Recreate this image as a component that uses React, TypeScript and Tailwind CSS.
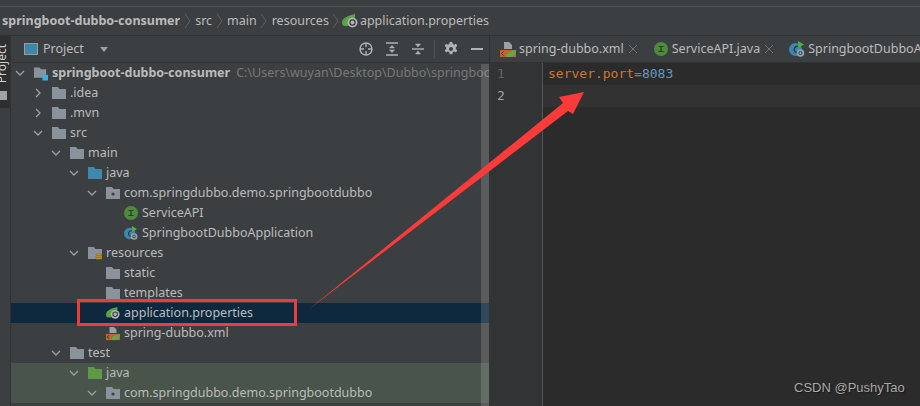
import type { ReactNode } from "react";

const UI = "font-['Noto_Sans','Open_Sans',sans-serif]";

function Chevron({ open }: { open: boolean }) {
  return (
    <svg width="14" height="14" viewBox="0 0 14 14" fill="none" stroke="#9da0a2" strokeWidth="1.3">
      {open ? <path d="M3 5l4 4 4-4" /> : <path d="M5 3l4 4-4 4" />}
    </svg>
  );
}

function Folder({ color = "#8a939b", dot, lines }: { color?: string; dot?: boolean; lines?: boolean }) {
  return (
    <svg width="14" height="14" viewBox="0 0 14 14">
      <path d="M0 1h6l1.500 2H14v10H0z" fill={color} />
      {dot && <circle cx="7" cy="8" r="1.600" fill="#3c3f41" />}
      {lines && <path d="M8 8h6v1.200H8zM8 10h6v1.200H8zM8 12h6v1.200H8z" fill="#e0a030" stroke="#3c3f41" strokeWidth="0.3" />}
    </svg>
  );
}

function ModuleIcon() {
  return (
    <svg width="15" height="15" viewBox="0 0 15 15">
      <path d="M0 1h6l1.500 2H13v9H0z" fill="#8a939b" />
      <rect x="9" y="9" width="6" height="6" fill="#3bb0e0" />
    </svg>
  );
}

function InterfaceIcon() {
  return (
    <svg width="14" height="14" viewBox="0 0 14 14">
      <circle cx="7" cy="7" r="7" fill="#4f8a3c" />
      <path d="M4.500 4h5v1H7.600v4H9.500v1h-5V9h1.900V5H4.500z" fill="#2c3a28" />
    </svg>
  );
}

function SpringAppIcon() {
  return (
    <svg width="16" height="16" viewBox="0 0 16 16">
      <circle cx="6.500" cy="8.500" r="6.500" fill="#3d87ad" />
      <path d="M9.500 5.500a3.200 3.200 0 1 0 0 6" fill="none" stroke="#2c3a44" strokeWidth="1.400" />
      <path d="M9 0l6 3.500L9 7z" fill="#4fae3f" />
      <circle cx="11.500" cy="12" r="3.800" fill="#8fa3b0" />
      <circle cx="11.500" cy="12" r="1.600" fill="none" stroke="#3c3f41" strokeWidth="1" />
    </svg>
  );
}

function LeafPropsIcon() {
  return (
    <svg width="16" height="14" viewBox="0 0 16 14">
      <path d="M0 9C0 4 5 2 13 0c.5 3-.5 5-3 6l-4 6H3C1 12 0 11 0 9z" fill="#5aa345" />
      <circle cx="10.500" cy="8.500" r="5" fill="#aeb4b8" />
      <circle cx="10.500" cy="8.500" r="2.600" fill="none" stroke="#3a3d3f" strokeWidth="1.200" />
    </svg>
  );
}

function XmlSpringIcon() {
  return (
    <svg width="16" height="15" viewBox="0 0 16 15">
      <path d="M4 0h5l3 3v4H4z" fill="#9aa0a5" />
      <rect x="0" y="8" width="16" height="7" fill="#c4612c" />
      <path d="M3.500 9.500L1.500 11.500l2 2" fill="none" stroke="#2b2b2b" strokeWidth="1" />
      <path d="M6 15c0-4 4-6 10-7 0 4-2 7-6 7z" fill="#62a84b" />
    </svg>
  );
}

type Row = {
  depth: number;
  label: string;
  open?: boolean;
  icon: ReactNode;
  bg?: string;
  hint?: string;
  bold?: boolean;
};

const rows: Row[] = [
  { depth: 0, label: "springboot-dubbo-consumer", open: true, icon: <ModuleIcon />, bold: true, hint: "C:\\Users\\wuyan\\Desktop\\Dubbo\\springboot-dubbo-consumer" },
  { depth: 1, label: ".idea", open: false, icon: <Folder /> },
  { depth: 1, label: ".mvn", open: false, icon: <Folder /> },
  { depth: 1, label: "src", open: true, icon: <Folder /> },
  { depth: 2, label: "main", open: true, icon: <Folder /> },
  { depth: 3, label: "java", open: true, icon: <Folder color="#3f88ab" /> },
  { depth: 4, label: "com.springdubbo.demo.springbootdubbo", open: true, icon: <Folder dot /> },
  { depth: 5, label: "ServiceAPI", icon: <InterfaceIcon /> },
  { depth: 5, label: "SpringbootDubboApplication", icon: <SpringAppIcon /> },
  { depth: 3, label: "resources", open: true, icon: <Folder lines /> },
  { depth: 4, label: "static", icon: <Folder /> },
  { depth: 4, label: "templates", icon: <Folder /> },
  { depth: 4, label: "application.properties", icon: <LeafPropsIcon />, bg: "bg-[#0e293e]" },
  { depth: 4, label: "spring-dubbo.xml", icon: <XmlSpringIcon /> },
  { depth: 2, label: "test", open: true, icon: <Folder /> },
  { depth: 3, label: "java", open: true, icon: <Folder color="#5c9a48" />, bg: "bg-[#49544a]" },
  { depth: 4, label: "com.springdubbo.demo.springbootdubbo", open: true, icon: <Folder dot />, bg: "bg-[#49544a]" },
];

function TreeRow({ row }: { row: Row }) {
  const hasChevron = row.open !== undefined;
  return (
    <div
      className={`flex h-5 shrink-0 items-center whitespace-nowrap ${row.bg ?? ""}`}
      style={{ paddingLeft: 2 + row.depth * 18 }}
    >
      <span className="flex w-[14px] shrink-0 justify-center">
        {hasChevron && <Chevron open={!!row.open} />}
      </span>
      <span className="ml-[7px] flex w-[14px] shrink-0 items-center">{row.icon}</span>
      <span className={`ml-1 ${row.bold ? "font-bold" : ""}`}>{row.label}</span>
      {row.hint && <span className="ml-[6px] text-[#787878]">{row.hint}</span>}
    </div>
  );
}

function Sep() {
  return (
    <svg width="8" height="18" viewBox="0 0 8 18" fill="none" stroke="#5e6163" className="mx-[3.5px]">
      <path d="M1 2l5 7-5 7" />
    </svg>
  );
}

function Tab({ icon, label, close }: { icon: ReactNode; label: string; close?: boolean }) {
  return (
    <div className="flex shrink-0 items-center">
      <span className="flex w-4 justify-center">{icon}</span>
      <span className="ml-[3px]">{label}</span>
      {close && (
        <svg width="8" height="8" viewBox="0 0 8 8" stroke="#6e7274" className="ml-[5px] mr-[16px]">
          <path d="M0 0l8 8M8 0L0 8" />
        </svg>
      )}
    </div>
  );
}

export default function App() {
  return (
    <div className={`relative flex h-[406px] w-[920px] flex-col overflow-hidden bg-[#3c3f41] text-[12.5px] leading-5 text-[#bbbbbb] ${UI}`}>
      <div className="h-[7px] shrink-0 border-b border-[#515355]" />

      <div className="flex h-[29px] shrink-0 items-center border-b border-[#323232] pl-[2px]">
        <span className="font-bold">springboot-dubbo-consumer</span>
        <Sep />
        <span>src</span>
        <Sep />
        <span>main</span>
        <Sep />
        <span>resources</span>
        <Sep />
        <span className="-ml-[2px] mr-[2px] flex">
          <LeafPropsIcon />
        </span>
        <span>application.properties</span>
      </div>

      <div className="flex min-h-0 flex-1">
        <div className="w-[11px] shrink-0 overflow-hidden border-r border-[#323232]">
          <div className="flex h-[72px] flex-col items-end bg-[#2d2f30] pt-[8px]">
            <span className="mr-[2px] rotate-180 text-[12px] leading-3 text-[#d0d0d0] [writing-mode:vertical-rl]">Project</span>
            <svg width="7" height="9" viewBox="0 0 7 9" className="mr-[3px] mt-[8px]">
              <path d="M0 0h7v9H0z" fill="#a0a2a4" />
            </svg>
          </div>
        </div>

        <div className="relative flex w-[478px] shrink-0 flex-col">
          <div className="flex h-[27px] shrink-0 items-center border-b border-[#323232] pl-[13px]">
            <svg width="14" height="12" viewBox="0 0 14 12">
              <rect x="0.500" y="0.500" width="13" height="11" fill="#3f86a8" stroke="#9a9da0" />
            </svg>
            <span className="ml-[5px]">Project</span>
            <svg width="8" height="5" viewBox="0 0 8 5" className="ml-[16px]">
              <path d="M0 0h8L4 5z" fill="#9da0a2" />
            </svg>
            <div className="ml-auto flex items-center pr-[6px]">
              <svg width="14" height="14" viewBox="0 0 14 14" fill="none" stroke="#afb1b3" strokeWidth="1.400" className="mr-[12px]">
                <circle cx="7" cy="7" r="6" />
                <path d="M7 1v4M7 9v4M1 7h4M9 7h4" />
              </svg>
              <svg width="14" height="14" viewBox="0 0 14 14" fill="none" stroke="#afb1b3" strokeWidth="1.400" className="mr-[12px]">
                <path d="M1 1h12M1 13h12" />
                <path d="M7 3.500l2.500 2.500h-5zM7 10.500l2.500-2.500h-5z" fill="#afb1b3" strokeWidth="0.500" />
              </svg>
              <svg width="14" height="14" viewBox="0 0 14 14" fill="none" stroke="#afb1b3" strokeWidth="1.400" className="mr-[9px]">
                <path d="M1 7h12" />
                <path d="M7 5L4.500 2h5zM7 9l2.500 3h-5z" fill="#afb1b3" strokeWidth="0.500" />
              </svg>
              <div className="mr-[9px] h-[18px] w-px bg-[#515355]" />
              <svg width="14" height="14" viewBox="0 0 14 14" className="mr-[13px]">
                <path d="M5.700 0h2.600l.4 2 1.500.7 1.800-1 1.300 2.200-1.500 1.300v1.700l1.500 1.400-1.300 2.200-1.800-1-1.500.8-.4 2H5.700l-.4-2-1.500-.8-1.800 1L.700 8.300l1.500-1.400V5.200L.700 3.900 2 1.700l1.800 1 1.500-.7z" fill="#afb1b3" />
                <circle cx="7" cy="7" r="2" fill="#3c3f41" />
              </svg>
              <div className="h-[2px] w-[12px] bg-[#afb1b3]" />
            </div>
          </div>

          <div className="flex min-h-0 flex-1 flex-col overflow-hidden">
            {rows.map((row, i) => (
              <TreeRow key={i} row={row} />
            ))}
          </div>

          {/* overlay scrollbar */}
          <div className="absolute bottom-0 right-0 top-[28px] w-2 bg-white/15" />
        </div>

        <div className="flex min-w-0 flex-1 flex-col bg-[#2b2b2b]">
          <div className="flex h-[27px] shrink-0 items-center overflow-hidden border-b border-l border-[#323232] bg-[#3c3f41] pl-[10px]">
            <Tab icon={<XmlSpringIcon />} label="spring-dubbo.xml" close />
            <Tab icon={<InterfaceIcon />} label="ServiceAPI.java" close />
            <Tab icon={<SpringAppIcon />} label="SpringbootDubboApplication.java" />
          </div>
          <div className="flex min-h-0 flex-1 font-['DejaVu_Sans_Mono',monospace] text-[13px]">
            <div className="w-[54px] shrink-0 border-r border-[#555555] bg-[#313335] pl-[8px] text-[#606366]">
              <div className="h-[22px] leading-[22px]">1</div>
              <div className="h-[22px] leading-[22px] text-[#a4a3a3]">2</div>
            </div>
            <div className="min-w-0 flex-1">
              <div className="h-[22px] pl-[5px] leading-[22px]">
                <span className="text-[#cc7832]">server.port</span>
                <span className="text-[#808080]">=</span>
                <span className="text-[#6897bb]">8083</span>
              </div>
              <div className="h-[22px] bg-[#323232]" />
            </div>
          </div>
        </div>
      </div>

      {/* annotations drawn over the screenshot */}
      <div className="absolute left-[77px] top-[299px] h-[27px] w-[220px] border-[3px] border-[#ef3b3b]" />
      <svg className="absolute left-0 top-0" width="920" height="406" viewBox="0 0 920 406">
        <path d="M308 310L563 103L559 97L584 92L573 114L568 111Z" fill="#fb3a3a" />
      </svg>
      <div className="absolute left-[794px] top-[380px] font-['Liberation_Sans',sans-serif] text-[13px] leading-4 text-[#a8a8a8] [text-shadow:1px_1px_1px_#1a1a1a]">
        CSDN @PushyTao
      </div>
    </div>
  );
}
